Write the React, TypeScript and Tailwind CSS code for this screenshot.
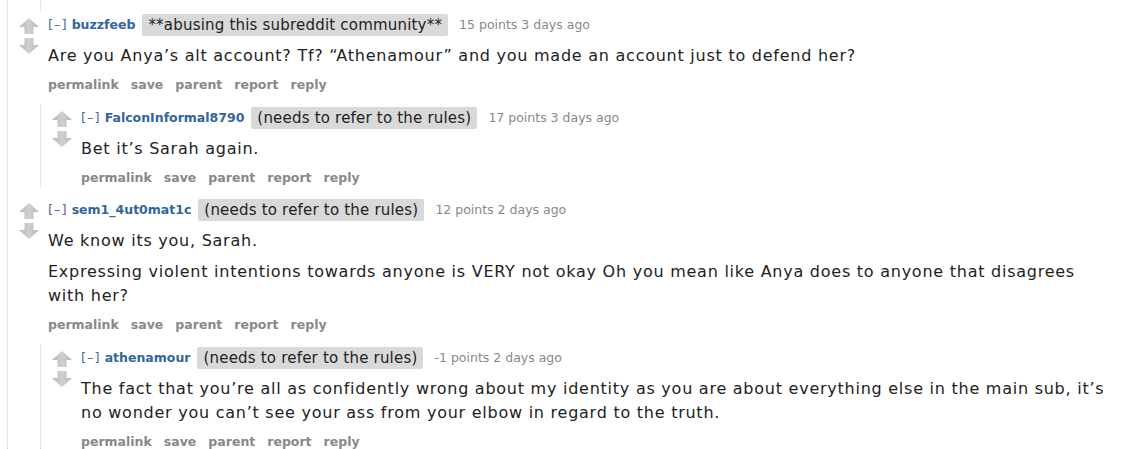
import React from "react";

type CommentData = {
  user: string;
  flair: string;
  score: string;
  body: React.ReactNode[];
  replies?: CommentData[];
};

const comments: CommentData[] = [
  {
    user: "buzzfeeb",
    flair: "**abusing this subreddit community**",
    score: "15 points 3 days ago",
    body: [
      <>Are you Anya’s alt account? Tf? “Athenamour” and you made an account just to defend her?</>,
    ],
    replies: [
      {
        user: "FalconInformal8790",
        flair: "(needs to refer to the rules)",
        score: "17 points 3 days ago",
        body: [<>Bet it’s Sarah again.</>],
      },
    ],
  },
  {
    user: "sem1_4ut0mat1c",
    flair: "(needs to refer to the rules)",
    score: "12 points 2 days ago",
    body: [
      <>We know its you, Sarah.</>,
      <>
        Expressing violent intentions towards anyone is VERY not okay Oh you mean like Anya does to anyone that disagrees
        <br />
        with her?
      </>,
    ],
    replies: [
      {
        user: "athenamour",
        flair: "(needs to refer to the rules)",
        score: "-1 points 2 days ago",
        body: [
          <>
            The fact that you’re all as confidently wrong about my identity as you are about everything else in the main sub, it’s
            <br />
            no wonder you can’t see your ass from your elbow in regard to the truth.
          </>,
        ],
      },
    ],
  },
];

const UpArrow = () => (
  <svg width="20" height="16" viewBox="0 0 20 16">
    <defs>
      <linearGradient id="arrowfill" x1="0" y1="0" x2="1" y2="0">
        <stop offset="0" stopColor="#b5b5b5" />
        <stop offset="0.5" stopColor="#d0d0d0" />
        <stop offset="1" stopColor="#b5b5b5" />
      </linearGradient>
    </defs>
    <path d="M10 0 L20 9 L14.5 9 L14.5 16 L5.5 16 L5.5 9 L0 9 Z" fill="url(#arrowfill)" />
  </svg>
);

const DownArrow = () => (
  <svg width="20" height="16" viewBox="0 0 20 16">
    <path d="M10 16 L20 7 L14.5 7 L14.5 0 L5.5 0 L5.5 7 L0 7 Z" fill="url(#arrowfill)" />
  </svg>
);

const Comment = ({ c, first }: { c: CommentData; first?: boolean }) => {
  return (
    <div className={first ? "pt-[3px]" : "mt-[9px] pt-[3px]"}>
      <div className="flex">
        {/* vote arrows */}
        <div className="w-[40px] pl-[11px] pt-[4px] flex flex-col gap-[4px] shrink-0">
          <UpArrow />
          <DownArrow />
        </div>
        <div className="flex-1 min-w-0">
          <div className="flex items-center h-[22px] whitespace-nowrap">
            <span className="text-[13px] tracking-[1px] text-[#4a6d98] mr-[4px]">[–]</span>
            <span className="text-[12.5px] font-bold text-[#336699]">{c.user}</span>
            <span className="ml-[7px] bg-[#d9d9d9] px-[6px] h-[22px] leading-[22px] text-[15px] tracking-[0.2px] text-[#222] rounded-[2px]">
              {c.flair}
            </span>
            <span className="ml-[11px] text-[12.5px] text-[#888]">{c.score}</span>
          </div>
          <div className="mt-[8px] text-[16px] tracking-[0.75px] leading-[24px] text-[#222] flex flex-col gap-[7px] whitespace-nowrap">
            {c.body.map((p, i) => (
              <p key={i}>{p}</p>
            ))}
          </div>
          <ul className="mt-[8px] flex gap-[12px] text-[12.5px] leading-[18px] font-bold text-[#888]">
            <li>permalink</li>
            <li>save</li>
            <li>parent</li>
            <li>report</li>
            <li>reply</li>
          </ul>
        </div>
      </div>
      {c.replies && (
        <div className="ml-[32px] mt-[10px] border-l border-dotted border-[#cfcfcf]">
          {c.replies.map((r, i) => (
            <Comment key={i} c={r} first />
          ))}
        </div>
      )}
    </div>
  );
};

export default function App() {
  return (
    <div className="w-[1124px] h-[449px] bg-white overflow-hidden font-['DejaVu_Sans',Verdana,sans-serif]">
      <div className="ml-[7px] h-full border-l border-dotted border-[#cfcfcf]">
        {/* tail of the previous reply thread */}
        <div className="ml-[32px] h-[11px] border-l border-dotted border-[#cfcfcf]" />
        {comments.map((c, i) => (
          <Comment key={i} c={c} first={i === 0} />
        ))}
      </div>
    </div>
  );
}
